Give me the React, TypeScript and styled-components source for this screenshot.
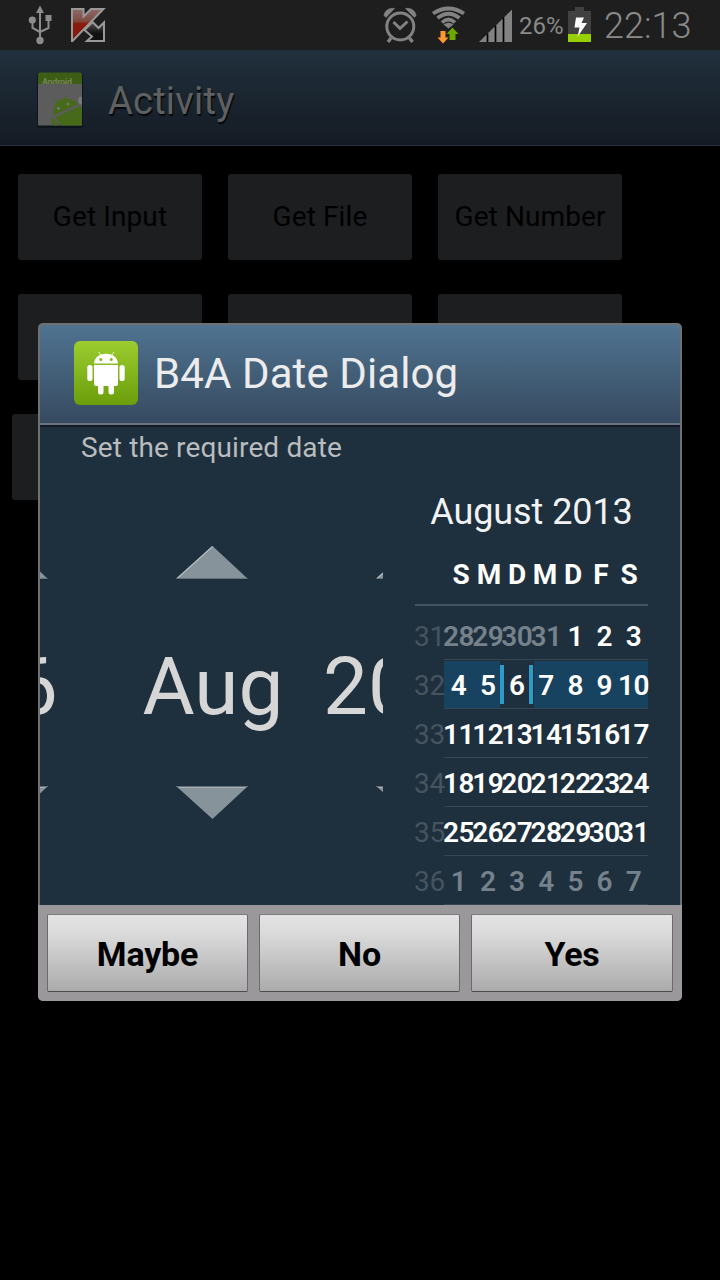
import React from "react";
import styled, { createGlobalStyle } from "styled-components";

const Global = createGlobalStyle`
  *, *::before, *::after { box-sizing: border-box; }
  html, body { margin: 0; padding: 0; background: #000; }
  body { font-family: Roboto, "Liberation Sans", sans-serif; overflow: hidden; }
  svg { display: block; flex: none; }
`;

const Screen = styled.div`
  position: relative;
  width: 720px;
  height: 1280px;
  background: #000;
  overflow: hidden;
`;

const StatusBar = styled.header`
  display: flex;
  justify-content: space-between;
  height: 50px;
  background: #1e1e1e;
  color: #8a8a8a;
`;

const StatusGroup = styled.div<{ $end?: boolean }>`
  display: flex;
  height: 50px;
  padding: ${(p) => (p.$end ? "0 29px 0 0" : "0 0 0 20px")};
`;

const StatusText = styled.span<{ $size: number; $width: number }>`
  width: ${(p) => p.$width}px;
  padding-top: 2px;
  font-size: ${(p) => p.$size}px;
  font-weight: ${(p) => (p.$size > 30 ? 300 : 400)};
  line-height: 48px;
  height: 50px;
  white-space: nowrap;
`;

const ActionBar = styled.div`
  display: flex;
  align-items: center;
  height: 96px;
  padding: 4px 0 0 30px;
  background: linear-gradient(#20303c, #151b24);
  border-bottom: 1px solid #273039;
`;

const ActionTitle = styled.h1`
  margin: 0 0 0 18px;
  padding-top: 2px;
  font-size: 38px;
  font-weight: 400;
  line-height: 48px;
  letter-spacing: 0.25px;
  color: #5f6061;
  text-shadow: 1px 2px 1px #05080b;
`;

const ButtonGrid = styled.main`
  display: flex;
  flex-direction: column;
  gap: 34px;
  padding-top: 28px;
`;

const ButtonRow = styled.div<{ $indent: number }>`
  display: flex;
  gap: 26px;
  padding-left: ${(p) => p.$indent}px;
`;

const GridButton = styled.button`
  width: 184px;
  height: 86px;
  padding: 0;
  border: 0;
  border-radius: 3px;
  background: #1d1e20;
  color: #000;
  font: 400 28px/84px Roboto, sans-serif;
  letter-spacing: 0.1px;
  white-space: nowrap;
`;

const Dialog = styled.section`
  position: absolute;
  left: 38px;
  top: 323px;
  width: 644px;
  height: 678px;
  display: flex;
  flex-direction: column;
  border-radius: 5px;
  background: #6f7070;
  overflow: hidden;
`;

const DialogHeader = styled.div`
  display: flex;
  align-items: flex-start;
  height: 102px;
  margin: 2px 2px 0;
  padding: 16px 0 0 34px;
  border-radius: 3px 3px 0 0;
  border-bottom: 2px solid #121b26;
  background: linear-gradient(#4f7390, #364a60 98px, #66727d 98px);
`;

const DialogTitle = styled.h2`
  margin: 0 0 0 16px;
  padding-top: 5px;
  font-size: 42px;
  font-weight: 400;
  line-height: 56px;
  letter-spacing: 0.1px;
  color: #ececec;
`;

const DialogBody = styled.div`
  flex: 1;
  display: flex;
  flex-direction: column;
  margin: 0 2px;
  background: #1e2f3d;
`;

const Message = styled.p`
  margin: 0;
  padding-left: 41px;
  height: 40px;
  font-size: 28px;
  line-height: 42px;
  letter-spacing: 0.14px;
  color: #b9bcbf;
`;

const Pickers = styled.div`
  flex: 1;
  display: flex;
  gap: 32px;
`;

const SpinnerStrip = styled.div`
  display: flex;
  justify-content: center;
  width: 343px;
  padding-top: 79px;
  overflow: hidden;
`;

const Spinner = styled.div`
  flex: none;
  display: flex;
  flex-direction: column;
  align-items: center;
  width: 200px;
`;

const SpinnerValue = styled.div`
  height: 207px;
  padding-left: 3px;
  font-size: 80px;
  line-height: 217px;
  color: #d6d6d6;
`;

const Calendar = styled.div`
  width: 233px;
  display: flex;
  flex-direction: column;
`;

const MonthTitle = styled.div`
  height: 90px;
  font-size: 36px;
  line-height: 90px;
  text-align: center;
  letter-spacing: -0.08px;
  color: #f1f2f3;
`;

const DayNames = styled.div`
  display: flex;
  height: 49px;
  padding-left: 32px;
  border-bottom: 2px solid #46545f;
  margin-bottom: 5px;
`;

const DayName = styled.span`
  width: 28px;
  font-size: 28px;
  font-weight: 700;
  line-height: 36px;
  text-align: center;
  color: #fff;
`;

const Week = styled.div`
  display: flex;
  height: 49px;
`;

const WeekNumber = styled.span`
  flex: none;
  width: 29px;
  display: flex;
  justify-content: center;
  font-size: 28px;
  line-height: 51px;
  letter-spacing: -0.3px;
  color: #46545f;
`;

const Days = styled.div<{ $active: boolean }>`
  display: flex;
  flex: 1;
  min-width: 0;
  border-bottom: 1px solid #384651;
  border-top: ${(p) => (p.$active ? "1px solid #1e2f3d" : "0")};
  background: ${(p) => (p.$active ? "#184360" : "transparent")};
`;

const Day = styled.span<{ $dim: boolean; $selected: boolean }>`
  position: relative;
  flex: 1 1 0;
  min-width: 0;
  display: flex;
  justify-content: center;
  font-size: 28px;
  font-weight: 600;
  letter-spacing: -0.5px;
  line-height: 51px;
  height: 48px;
  color: ${(p) => (p.$dim ? "#75818b" : "#fff")};

  ${(p) =>
    p.$selected &&
    `
    &::before {
      content: "";
      position: absolute;
      left: -2px;
      right: -3px;
      top: 0;
      bottom: 1px;
      background: #1e2f3d;
    }
    &::after {
      content: "";
      position: absolute;
      left: -2px;
      right: -2px;
      top: 4px;
      height: 39px;
      border: solid #2f9bc9;
      border-width: 0 4px;
    }
  `}
`;

const DayValue = styled.span<{ $active: boolean }>`
  position: relative;
  z-index: 1;
  top: ${(p) => (p.$active ? -1 : 0)}px;
`;

const DialogFooter = styled.div`
  display: grid;
  grid-template-columns: 201px 201px 202px;
  gap: 11px;
  height: 96px;
  padding: 9px;
  background: #9b989b;
`;

const DialogButton = styled.button`
  height: 78px;
  padding: 2px 0 0;
  border: 1px solid #6b6a6b;
  border-top-color: #7d7b7d;
  border-bottom-color: #4c4b4c;
  border-radius: 2px;
  background: linear-gradient(#e3e3e3, #dcdcdc 22%, #ababab);
  color: #000;
  font: 700 34px/74px Roboto, sans-serif;
  letter-spacing: -0.2px;
`;

const UsbIcon = () => (
  <svg width="40" height="50" viewBox="20 0 40 50" fill="none" stroke="#8c8c8c" strokeWidth="2">
    <path d="M40 11V38M32.500 20V28L40 32M48.500 18V28L40 32" />
    <path d="M40 5.500 44 13H36Z" fill="#8c8c8c" stroke="none" />
    <circle cx="32.300" cy="20" r="3.600" fill="#8c8c8c" stroke="none" />
    <path d="M45.500 15H51.500V21H45.500Z" fill="#8c8c8c" stroke="none" />
    <circle cx="40" cy="40.500" r="3.700" fill="#8c8c8c" stroke="none" />
  </svg>
);

const KIcon = () => (
  <svg width="60" height="50" viewBox="60 0 60 50">
    <defs>
      <linearGradient id="kred" x1="0" y1="0" x2="0" y2="1">
        <stop offset="0" stopColor="#8d6c68" />
        <stop offset="0.38" stopColor="#7f4a42" />
        <stop offset="0.46" stopColor="#8a1a0c" />
        <stop offset="1" stopColor="#801b0d" />
      </linearGradient>
      <linearGradient id="kblack" x1="0" y1="0" x2="0" y2="1">
        <stop offset="0" stopColor="#555" />
        <stop offset="0.6" stopColor="#111" />
      </linearGradient>
    </defs>
    <path d="M72 9H83.500V16.500L91 9H103.500L72.500 41H72Z" fill="url(#kred)" stroke="#999" strokeWidth="2" />
    <path d="M84.500 30 92.500 22 98.500 28 104 22.500V41H87L92 36.500Z" fill="url(#kblack)" stroke="#999" strokeWidth="2" />
  </svg>
);

const AlarmIcon = () => (
  <svg width="50" height="50" viewBox="375 0 50 50" fill="none" stroke="#828282">
    <circle cx="400.300" cy="26.500" r="13.500" strokeWidth="3" />
    <path d="M393.500 22 400 28.500 407.500 21.500" strokeWidth="3" />
    <path d="M391 38 388 42M409.500 38 412.500 42" strokeWidth="3.400" />
    <path d="M384 15.500C384.500 11 389 7.500 394.500 8.500L386 17.500ZM416 15.500C415.500 11 411 7.500 405.500 8.500L414.500 17.500Z" fill="#828282" stroke="#828282" strokeWidth="0.600" />
  </svg>
);

const WifiIcon = () => (
  <svg width="50" height="50" viewBox="425 0 50 50" fill="none">
    <path d="M433 13.500Q448.500 3.500 464 13.500M437.500 18Q448.500 9.500 459.500 18M442 22.500Q448.500 16.500 455 22.500" stroke="#828282" strokeWidth="3.700" />
    <path d="M443.500 24.500Q448.500 21 453.500 24.500L448.500 28.500Z" fill="#828282" />
    <path d="M440.500 31H445.500V37.500H448.500L443 43.500 437.500 37.500H440.500Z" fill="#ff9a2e" />
    <path d="M449.500 40V34H446.500L452.500 27.500 458.500 34H455.500V40Z" fill="#6ea700" />
  </svg>
);

const SignalIcon = () => (
  <svg width="44" height="50" viewBox="475 0 44 50">
    <path d="M479 42 512 9.500V42Z" fill="#828282" />
    <path d="M487.500 33.500V42M495.500 25.500V42M503.500 17.500V42" stroke="#000" strokeWidth="1.700" />
  </svg>
);

const BatteryIcon = () => (
  <svg width="36" height="50" viewBox="568 0 36 50">
    <path d="M575 7H584V11H591V42H568V11H575Z" fill="#414141" />
    <path d="M568 34H591V42H568Z" fill="#97d000" />
    <path d="M576 17.500H584L581.500 23H587L577.500 37 579.500 27.500H574.500Z" fill="#fff" />
  </svg>
);

const AppIcon = () => (
  <svg width="60" height="64" viewBox="30 67 60 64">
    <rect x="37" y="73" width="46" height="54" rx="2" fill="#0d1218" opacity="0.800" />
    <path d="M38 74Q38 71.500 40.500 71.500H79.500Q82 71.500 82 74V84H38Z" fill="#3d5c14" />
    <text x="42" y="84" fontSize="9" fontWeight="700" fontFamily="Roboto, sans-serif" fill="#748259" textLength="30">Android</text>
    <path d="M38 83H82V124.500H38Z" fill="#5c5c5c" />
    <path d="M82 95.500A4 4 0 0 0 82 103.500Z" fill="#777" />
    <g fill="#47691a">
      <path d="M53.300 114.500C52.500 104 58 97.500 65.500 97.500 71 97.500 75.500 99.500 78 103Z" />
      <path d="M55.300 116.500 80 105 82 107.500V124.500H61Z" />
      <path d="M51.500 120Q51 116.500 54 117.500L58.500 124.500H53.500Z" />
      <path d="M57 102 53.500 96.500M66 99V94" stroke="#47691a" strokeWidth="1" />
    </g>
    <circle cx="58.500" cy="107.500" r="1.400" fill="#777" />
    <circle cx="68" cy="103" r="1.400" fill="#777" />
  </svg>
);

const RobotIcon = () => (
  <svg width="64" height="64" viewBox="0 0 64 64">
    <defs>
      <linearGradient id="robot" x1="0" y1="0" x2="0" y2="1">
        <stop offset="0" stopColor="#9bcd30" />
        <stop offset="1" stopColor="#6b9d0b" />
      </linearGradient>
    </defs>
    <rect width="64" height="64" rx="6" fill="url(#robot)" />
    <g fill="#fff">
      <path d="M20 22.500C20.500 16 26 12.800 32 12.800S43.500 16 44 22.500Z" />
      <path d="M20 24H44V43Q44 45 42 45H22Q20 45 20 43Z" />
      <rect x="13.300" y="24" width="5.200" height="16" rx="2.600" />
      <rect x="45.500" y="24" width="5.200" height="16" rx="2.600" />
      <rect x="24" y="40" width="5.500" height="13.500" rx="2.500" />
      <rect x="34.500" y="40" width="5.500" height="13.500" rx="2.500" />
    </g>
    <path d="M27 14.500 24.500 10.800M37.500 14.500 40 10.800" stroke="#e9f4cc" strokeWidth="1" />
    <circle cx="26.800" cy="18.600" r="1.500" fill="#84b71f" />
    <circle cx="37.300" cy="18.600" r="1.500" fill="#84b71f" />
  </svg>
);

const UpArrow = () => (
  <svg width="72" height="33" viewBox="0 0 72 33">
    <path d="M0 33 36.500 0 72 33Z" fill="#87939a" />
    <path d="M1 32.500 36.500 0.500" stroke="#b4bcc0" strokeWidth="1.200" />
    <path d="M1 32.500H71" stroke="#65717a" strokeWidth="1" />
  </svg>
);

const DownArrow = () => (
  <svg width="72" height="33" viewBox="0 0 72 33">
    <path d="M0 0H72L36.500 33Z" fill="#87939a" />
    <path d="M0 0.500H72" stroke="#65717a" strokeWidth="1" />
    <path d="M2 1.500H70" stroke="#a4aeb3" strokeWidth="1" />
  </svg>
);

const dayNames = ["S", "M", "D", "M", "D", "F", "S"];
const weeks = [
  { number: 31, days: [28, 29, 30, 31, 1, 2, 3] },
  { number: 32, days: [4, 5, 6, 7, 8, 9, 10] },
  { number: 33, days: [11, 12, 13, 14, 15, 16, 17] },
  { number: 34, days: [18, 19, 20, 21, 22, 23, 24] },
  { number: 35, days: [25, 26, 27, 28, 29, 30, 31] },
  { number: 36, days: [1, 2, 3, 4, 5, 6, 7] },
];

const isOutside = (week: number, day: number) =>
  (week === 31 && day > 7) || week === 36;

export default function App() {
  return (
    <Screen>
      <Global />
      <StatusBar>
        <StatusGroup>
          <UsbIcon />
          <KIcon />
        </StatusGroup>
        <StatusGroup $end>
          <AlarmIcon />
          <WifiIcon />
          <SignalIcon />
          <StatusText $size={24} $width={49}>26%</StatusText>
          <BatteryIcon />
          <StatusText $size={36} $width={87}>22:13</StatusText>
        </StatusGroup>
      </StatusBar>
      <ActionBar>
        <AppIcon />
        <ActionTitle>Activity</ActionTitle>
      </ActionBar>
      <ButtonGrid>
        <ButtonRow $indent={18}>
          <GridButton>Get Input</GridButton>
          <GridButton>Get File</GridButton>
          <GridButton>Get Number</GridButton>
        </ButtonRow>
        <ButtonRow $indent={18}>
          <GridButton />
          <GridButton />
          <GridButton />
        </ButtonRow>
        <ButtonRow $indent={12}>
          <GridButton />
        </ButtonRow>
      </ButtonGrid>
      <Dialog>
        <DialogHeader>
          <RobotIcon />
          <DialogTitle>B4A Date Dialog</DialogTitle>
        </DialogHeader>
        <DialogBody>
          <Message>Set the required date</Message>
          <Pickers>
            <SpinnerStrip>
              {["06", "Aug", "2013"].map((value) => (
                <Spinner key={value}>
                  <UpArrow />
                  <SpinnerValue>{value}</SpinnerValue>
                  <DownArrow />
                </Spinner>
              ))}
            </SpinnerStrip>
            <Calendar>
              <MonthTitle>August 2013</MonthTitle>
              <DayNames>
                {dayNames.map((name, i) => (
                  <DayName key={i}>{name}</DayName>
                ))}
              </DayNames>
              {weeks.map((week) => (
                <Week key={week.number}>
                  <WeekNumber>{week.number}</WeekNumber>
                  <Days $active={week.number === 32}>
                    {week.days.map((day) => (
                      <Day
                        key={day}
                        $dim={isOutside(week.number, day)}
                        $selected={week.number === 32 && day === 6}
                      >
                        <DayValue $active={week.number === 32}>{day}</DayValue>
                      </Day>
                    ))}
                  </Days>
                </Week>
              ))}
            </Calendar>
          </Pickers>
        </DialogBody>
        <DialogFooter>
          <DialogButton>Maybe</DialogButton>
          <DialogButton>No</DialogButton>
          <DialogButton>Yes</DialogButton>
        </DialogFooter>
      </Dialog>
    </Screen>
  );
}
